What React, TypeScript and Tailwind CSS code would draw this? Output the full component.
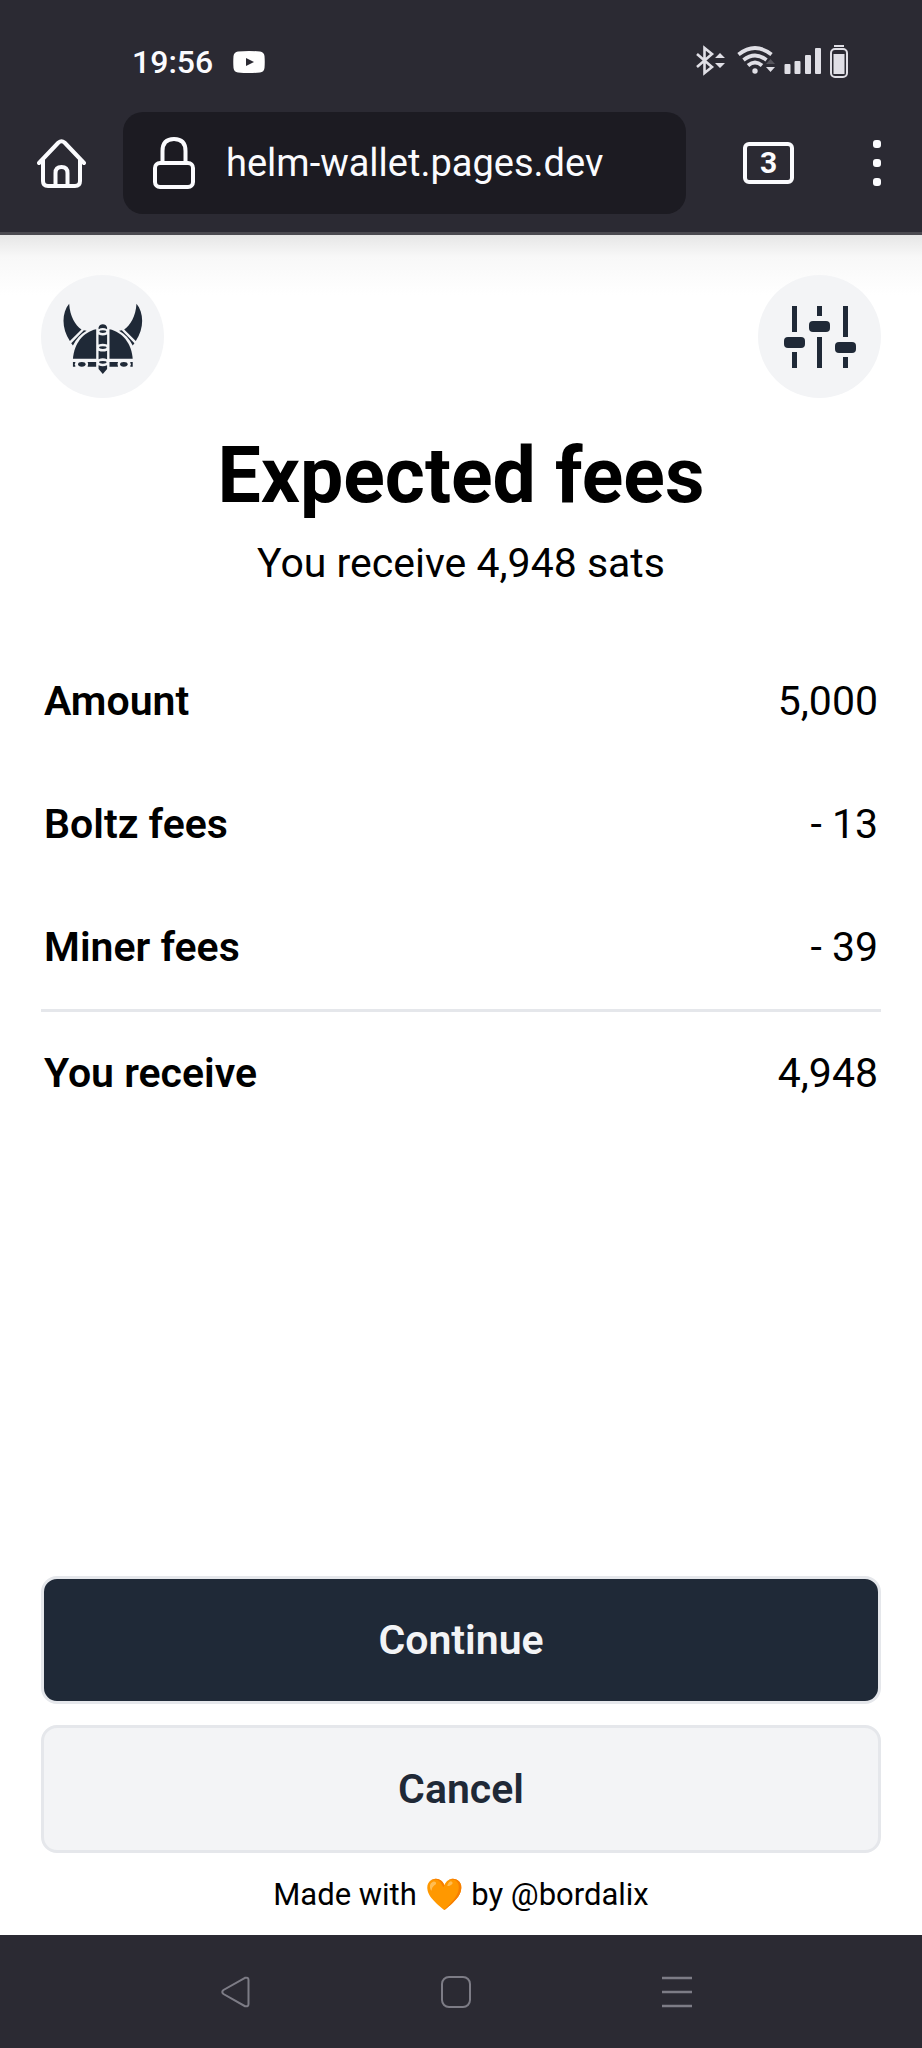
import React from 'react';

interface FeeRow {
  label: string;
  value: string;
}

const fees: FeeRow[] = [
  { label: 'Amount', value: '5,000' },
  { label: 'Boltz fees', value: '- 13' },
  { label: 'Miner fees', value: '- 39' },
];

const HelmetIcon: React.FC = () => (
  <svg viewBox="98 111 240 240" className="size-[82px]" fill="currentColor" aria-hidden="true">
    <g id="helmet-half">
      {/* Horn and its band */}
      <path d="M119 134C97 160 96 206 121 243L155 209C137 198 121 170 119 134Z" />
      <path d="M125 249L162 211L170 213C153 222 140 236 130 256Z" />
      {/* Dome */}
      <path d="M130 295C133 250 160 216 198 208V295Z" />
      {/* Rim */}
      <path d="M130 304H137V307Q133 311 137 315V318H130Z" />
      <ellipse cx="156" cy="311" rx="11" ry="7" />
      <path d="M173 304H198V318H173Q177 311 173 304Z" />
    </g>
    <use href="#helmet-half" transform="matrix(-1 0 0 1 435 0)" />
    {/* Nose guard */}
    <path d="M205 208V203Q208 194 217.500 194T230 203V208Q217.500 202 205 208Z" />
    <ellipse cx="217.500" cy="215" rx="10" ry="4" />
    <path d="M205 224Q217.500 229 230 224V253Q217.500 248 205 253Z" />
    <ellipse cx="217.500" cy="262" rx="11" ry="4" />
    <path d="M205 271Q217.500 276 230 271V296Q217.500 291 205 296Z" />
    <ellipse cx="217.500" cy="305" rx="11" ry="4" />
    <path d="M205 314Q217.500 319 230 314V325L217.500 339L205 325Z" />
  </svg>
);

const SlidersIcon: React.FC = () => (
  <svg viewBox="0 0 72 62" className="h-[62px] w-[72px]" fill="currentColor" aria-hidden="true">
    <path d="M8 0h5v26H8zM8 46h5v16H8zM33 0h5v10h-5zM33 31h5v31h-5zM59 0h5v31h-5zM59 51h5v11h-5z" />
    <rect x="0" y="31" width="21" height="11" rx="4" />
    <rect x="25" y="15" width="21" height="11" rx="4" />
    <rect x="51" y="36" width="21" height="11" rx="4" />
  </svg>
);

const StatusBar: React.FC = () => (
  <div className="flex h-9 items-center justify-between pr-[73px] pl-[132px]">
    <div className="flex items-center gap-5">
      <span className="text-[32px] leading-9 font-medium">19:56</span>
      <svg viewBox="0 0 32 22" className="h-[22px] w-8" aria-hidden="true">
        <path fill="#fff" fillRule="evenodd" d="M5 .5Q16-.5 27 .5Q31 1 31.500 5Q32 11 31.500 17Q31 21 27 21.500Q16 22.500 5 21.500Q1 21 .5 17Q0 11 .5 5Q1 1 5 .5ZM13 7V15L21 11Z" />
      </svg>
    </div>
    <svg viewBox="0 0 154 36" className="h-9 w-[154px] text-[#e0dfe6]" fill="currentColor" aria-hidden="true">
      {/* Bluetooth */}
      <path d="M2 10L17 23L9.500 29V4L17 10L2 23" fill="none" stroke="currentColor" strokeWidth="2.600" />
      <path d="M20 14L25 9L30 14ZM20 19H30L25 24Z" />
      {/* Wifi */}
      <g fill="none" stroke="currentColor" strokeWidth="3.800">
        <path d="M43.500 10.500Q60 -2.500 76.500 10.500" />
        <path d="M48.500 16Q60 7 71.500 16" />
        <path d="M53 21.500Q60 15.500 67 21.500" />
      </g>
      <circle cx="60" cy="27" r="2.700" />
      <path d="M71 20L75.500 15L80 20Z" fill="#55545c" />
      <path d="M71 23H80L75.500 28Z" />
      {/* Signal */}
      <rect x="89.500" y="20" width="6" height="10" rx="1" />
      <rect x="99.500" y="17" width="6" height="13" rx="1" />
      <rect x="110" y="11" width="6" height="19" rx="1" />
      <rect x="120" y="4" width="6" height="26" rx="1" />
      {/* Battery */}
      <rect x="139" y="1" width="10" height="2" />
      <rect x="136" y="5" width="16" height="28" rx="4" fill="none" stroke="currentColor" strokeWidth="2" />
      <rect x="138.500" y="10" width="11" height="20" />
    </svg>
  </div>
);

const AddressBar: React.FC = () => (
  <div className="flex items-center pr-[41px] pl-[37px]">
    <button type="button" aria-label="Home" className="mr-[37px]">
      <svg viewBox="0 0 49 49" className="size-[49px]" fill="none" stroke="currentColor" strokeWidth="4" strokeLinecap="round" strokeLinejoin="round" aria-hidden="true">
        <path d="M2 24L21.500 3.500Q24.500 1 27.500 3.500L47 24" />
        <path d="M6 21V42Q6 47 11 47H38Q43 47 43 42V21" />
        <path d="M18.500 47V34Q18.500 28 24.500 28T30.500 34V47" />
      </svg>
    </button>
    <div className="flex h-[102px] flex-1 items-center gap-[31px] rounded-[20px] bg-[#1c1b22] px-[30px]">
      <svg viewBox="0 0 42 52" className="h-[52px] w-[42px]" fill="none" stroke="currentColor" strokeWidth="4" aria-hidden="true">
        <rect x="2" y="26" width="38" height="24" rx="5" />
        <path d="M9.500 26V14Q9.500 2 21 2T32.500 14V26" />
      </svg>
      <span className="text-[38px] leading-[46px]">helm-wallet.pages.dev</span>
    </div>
    <button
      type="button"
      aria-label="3 open tabs"
      className="ml-[57px] flex h-[42px] w-[51px] items-center justify-center rounded-md border-4 border-current text-[30px] leading-8 font-bold"
    >
      3
    </button>
    <button type="button" aria-label="Menu" className="ml-[79px] flex flex-col gap-[11px]">
      <span className="size-2 rounded-[3px] bg-current" />
      <span className="size-2 rounded-[3px] bg-current" />
      <span className="size-2 rounded-[3px] bg-current" />
    </button>
  </div>
);

const SystemNav: React.FC = () => (
  <nav className="flex h-[113px] items-center justify-between bg-[#2b2a33] pr-[230px] pl-[220px] text-[#7d7c86]">
    <button type="button" aria-label="Back">
      <svg viewBox="0 0 30 32" className="h-8 w-[30px]" fill="none" stroke="currentColor" strokeWidth="2" aria-hidden="true">
        <path d="M25 1.800L3.500 14Q1 16 3.500 18L25 30.200Q28.500 31 28.500 28V4Q28.500 1 25 1.800Z" />
      </svg>
    </button>
    <button type="button" aria-label="Home screen">
      <svg viewBox="0 0 30 32" className="h-8 w-[30px]" fill="none" stroke="currentColor" strokeWidth="2" aria-hidden="true">
        <rect x="1" y="1" width="28" height="30" rx="7" />
      </svg>
    </button>
    <button type="button" aria-label="Recent apps">
      <svg viewBox="0 0 30 32" className="h-8 w-[30px]" stroke="currentColor" strokeWidth="2.500" aria-hidden="true">
        <path d="M0 2H30M0 16H30M0 30H30" />
      </svg>
    </button>
  </nav>
);

const App: React.FC = () => {
  return (
    <div className="flex min-h-screen flex-col bg-white font-['Roboto',sans-serif] text-black">
      <header className="flex flex-col gap-8 border-b-[3px] border-[#4a4950] bg-[#2b2a33] pt-11 pb-[18px] text-[#fbfbfe]">
        <StatusBar />
        <AddressBar />
      </header>

      <main className="flex flex-1 flex-col bg-linear-to-b from-[#e6e6e6] via-[#f8f8f8] via-[22px] to-white to-[60px] px-[41px] pt-10 pb-5">
        <div className="flex justify-between text-[#1f2937]">
          <button type="button" aria-label="Helm wallet" className="flex size-[123px] items-center justify-center rounded-full bg-[#f3f4f6]">
            <HelmetIcon />
          </button>
          <button type="button" aria-label="Settings" className="flex size-[123px] items-center justify-center rounded-full bg-[#f3f4f6]">
            <SlidersIcon />
          </button>
        </div>

        <h1 className="mt-8 text-center text-[77px] leading-[92px] font-bold">Expected fees</h1>
        <p className="mt-[11px] text-center text-[41px] leading-[61px]">You receive 4,948 sats</p>

        <table className="mt-[46px] w-full border-collapse text-[41px] leading-[61px]">
          <tbody>
            {fees.map((fee) => (
              <tr key={fee.label}>
                <th scope="row" className="px-[3px] py-[31px] text-left font-semibold">{fee.label}</th>
                <td className="px-[3px] py-[31px] text-right">{fee.value}</td>
              </tr>
            ))}
          </tbody>
          <tfoot>
            <tr className="border-t-3 border-[#e5e7eb]">
              <th scope="row" className="px-[3px] py-[31px] text-left font-semibold">You receive</th>
              <td className="px-[3px] py-[31px] text-right">4,948</td>
            </tr>
          </tfoot>
        </table>

        <div className="mt-auto flex flex-col gap-[21px]">
          <button type="button" className="h-32 rounded-2xl border-3 border-[#e5e7eb] bg-[#1f2937] pt-[2px] text-[41px] font-semibold text-[#f3f4f6]">
            Continue
          </button>
          <button type="button" className="h-32 rounded-2xl border-3 border-[#e5e7eb] bg-[#f3f4f6] pt-[2px] text-[41px] font-semibold text-[#1f2937]">
            Cancel
          </button>
          <p className="text-center text-[31px] leading-[41px]">
            Made with 🧡 by <a href="#bordalix">@bordalix</a>
          </p>
        </div>
      </main>

      <SystemNav />
    </div>
  );
};

export default App;
